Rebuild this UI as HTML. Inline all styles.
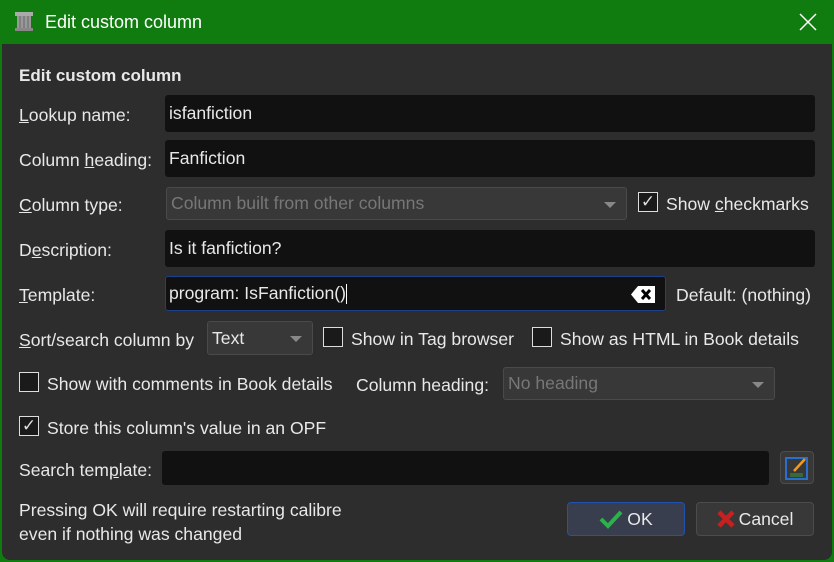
<!DOCTYPE html>
<html><head><meta charset="utf-8"><style>
*{box-sizing:border-box;margin:0;padding:0}
body{width:834px;height:562px;background:#107c10;font-family:"Liberation Sans",sans-serif;font-size:17.6px;color:#e8e8e8;position:relative;overflow:hidden}
.win{position:absolute;left:2px;top:44px;width:830px;height:516px;background:#2d2d2d;border-radius:0 0 8px 8px}
.a{position:absolute;white-space:nowrap}
.inp{position:absolute;background:#111;border-radius:3px;padding-left:4px;display:flex;align-items:center}
.cmb{position:absolute;background:#383838;border:1px solid #4a4a4a;border-radius:3px;padding-left:4px;display:flex;align-items:center}
.cmb:after{content:"";position:absolute;right:10px;top:50%;margin-top:-2px;border-left:6px solid transparent;border-right:6px solid transparent;border-top:6px solid #888}
.cb{position:absolute;width:20px;height:20px;border:1.5px solid #ddd;background:#1a1a1a;color:#ddd;font-size:17px;line-height:17px;text-align:center}
.btn{position:absolute;background:#383838;border:1px solid #4c4c4c;border-radius:4px;display:flex;align-items:center;justify-content:center;gap:4px}
u{text-decoration:underline}
</style></head><body>
<div class="a" style="left:13px;top:10px;width:22px;height:22px">
<svg width="22" height="22"><rect x="2" y="2" width="18" height="4" fill="#aaa"/><rect x="4" y="6" width="14" height="12" fill="#999"/><line x1="7" y1="6" x2="7" y2="18" stroke="#666"/><line x1="11" y1="6" x2="11" y2="18" stroke="#666"/><line x1="15" y1="6" x2="15" y2="18" stroke="#666"/><rect x="2" y="18" width="18" height="3" fill="#888"/></svg></div>
<div class="a" style="left:45px;top:12px;font-size:18px;color:#fff">Edit custom column</div>
<svg class="a" style="left:799px;top:13px" width="18" height="18"><path d="M1 1L17 17M17 1L1 17" stroke="#fff" stroke-width="1.5"/></svg>
<div class="win"></div>
<div class="a" style="left:19px;top:66px;font-weight:bold;font-size:17px">Edit custom column</div>

<div class="a" style="left:19px;top:105px"><u>L</u>ookup name:</div>
<div class="inp" style="left:165px;top:95px;width:650px;height:37px">isfanfiction</div>
<div class="a" style="left:19px;top:150px">Column <u>h</u>eading:</div>
<div class="inp" style="left:165px;top:140px;width:650px;height:37px">Fanfiction</div>
<div class="a" style="left:19px;top:195px"><u>C</u>olumn type:</div>
<div class="cmb" style="left:166px;top:187px;width:461px;height:33px;color:#777">Column built from other columns</div>
<div class="cb" style="left:638px;top:192px">✓</div>
<div class="a" style="left:666px;top:194px">Show <u>c</u>heckmarks</div>
<div class="a" style="left:19px;top:240px">D<u>e</u>scription:</div>
<div class="inp" style="left:165px;top:230px;width:650px;height:37px">Is it fanfiction?</div>
<div class="a" style="left:19px;top:285px"><u>T</u>emplate:</div>
<div class="inp" style="left:165px;top:276px;width:501px;height:35px;border:1px solid #1e3f8a;padding-left:3px">program: IsFanfiction()<span style="display:inline-block;width:1px;height:20px;background:#fff"></span>
<svg style="position:absolute;right:10px;top:9px" width="24" height="17"><path d="M7 0H24V17H7L0 8.5Z" fill="#fff"/><path d="M11 4L19 13M19 4L11 13" stroke="#000" stroke-width="3"/></svg></div>
<div class="a" style="left:676px;top:285px">Default: (nothing)</div>
<div class="a" style="left:19px;top:330px"><u>S</u>ort/search column by</div>
<div class="cmb" style="left:207px;top:321px;width:106px;height:34px">Text</div>
<div class="cb" style="left:323px;top:327px"></div>
<div class="a" style="left:351px;top:329px">Show in Tag browser</div>
<div class="cb" style="left:532px;top:327px"></div>
<div class="a" style="left:560px;top:329px">Show as HTML in Book details</div>
<div class="cb" style="left:19px;top:372px"></div>
<div class="a" style="left:47px;top:374px">Show with comments in Book details</div>
<div class="a" style="left:356px;top:375px">Column heading:</div>
<div class="cmb" style="left:503px;top:367px;width:272px;height:33px;color:#777">No heading</div>
<div class="cb" style="left:19px;top:416px">✓</div>
<div class="a" style="left:47px;top:418px">Store this column's value in an OPF</div>
<div class="a" style="left:19px;top:460px">Search tem<u>p</u>late:</div>
<div class="inp" style="left:162px;top:451px;width:607px;height:34px"></div>
<div class="btn" style="left:780px;top:451px;width:34px;height:33px">
<svg width="26" height="26"><rect x="2" y="3" width="21" height="21" fill="none" stroke="#2a6fd0" stroke-width="2"/><path d="M10 16L21 4" stroke="#f39a1c" stroke-width="2.5"/><line x1="6" y1="19" x2="19" y2="19" stroke="#3a9a3a"/><line x1="6" y1="21" x2="19" y2="21" stroke="#3a9a3a"/></svg></div>
<div class="a" style="left:19px;top:498px;line-height:24px">Pressing OK will require restarting calibre<br>even if nothing was changed</div>
<div class="btn" style="left:567px;top:502px;width:118px;height:34px;background:#383e4e;border:1.5px solid #2251b0">
<svg width="24" height="20"><path d="M2 10L9 17L22 3" fill="none" stroke="#2bb24a" stroke-width="4"/></svg>OK</div>
<div class="btn" style="left:696px;top:502px;width:118px;height:34px">
<svg width="18" height="18"><path d="M2 2L16 16M16 2L2 16" stroke="#c82020" stroke-width="4.5"/></svg>Cancel</div>
</body></html>
